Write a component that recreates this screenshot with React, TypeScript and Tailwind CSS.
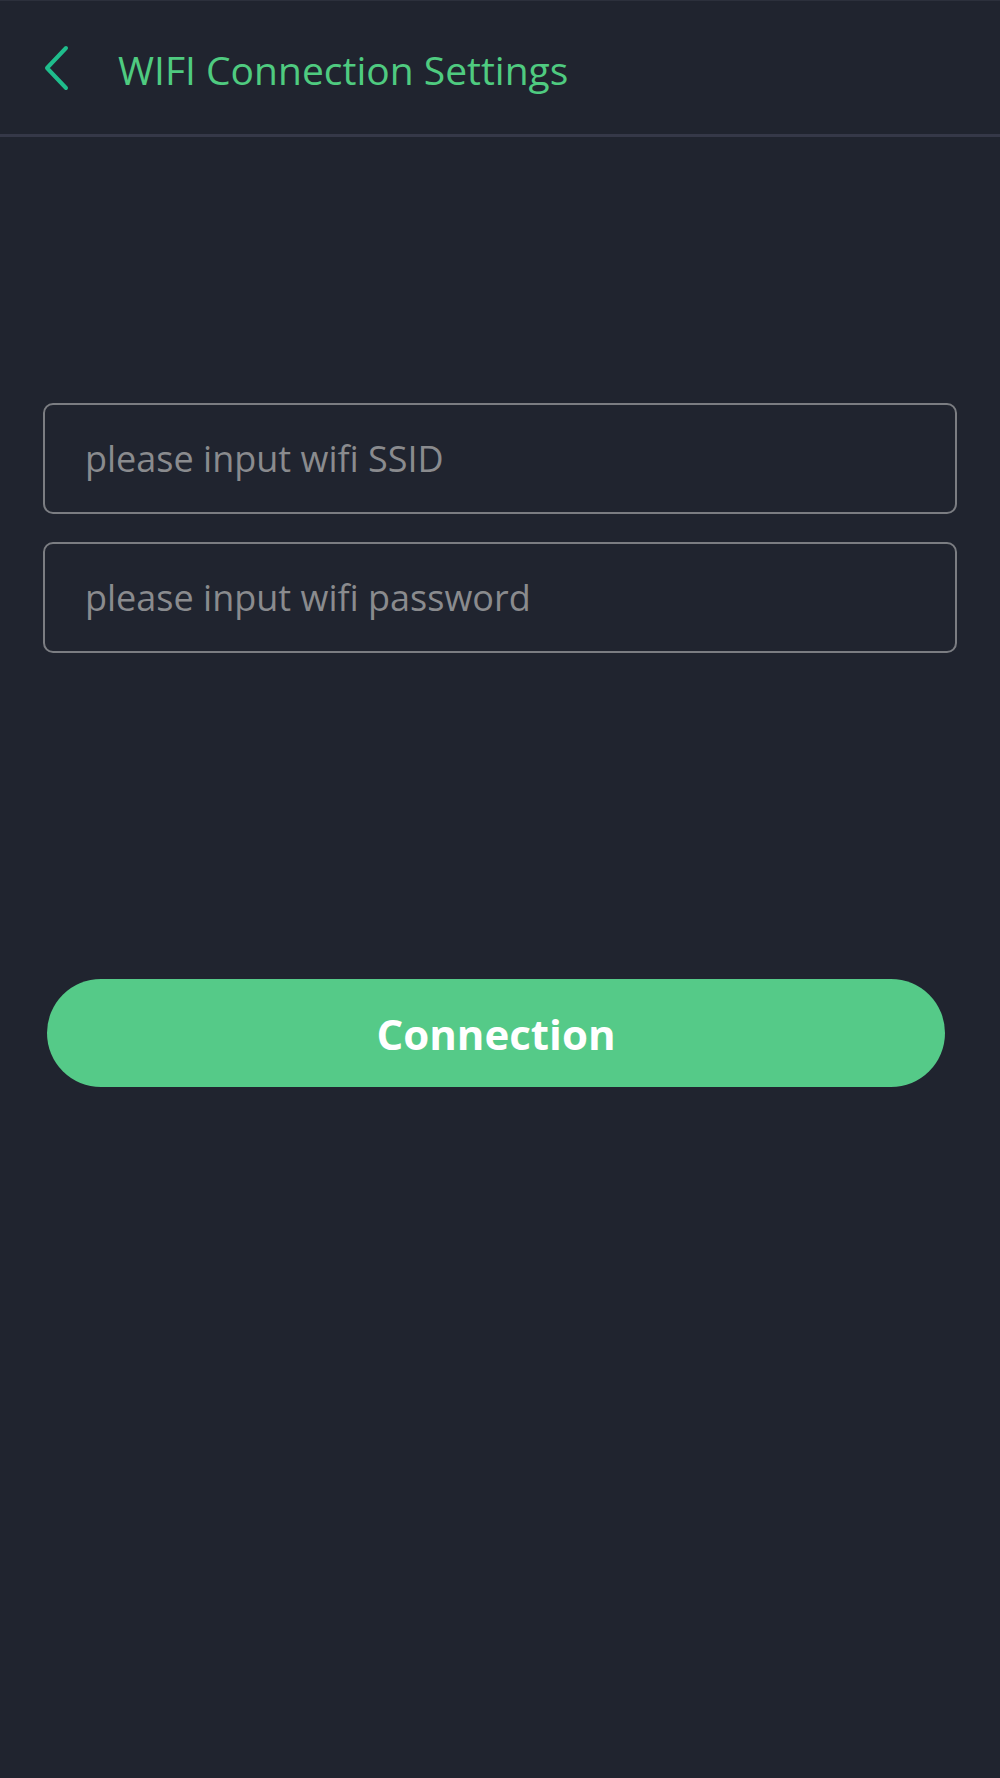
import React from 'react';

const App: React.FC = () => {
  return (
    <div className="min-h-[1778px] w-full bg-[#20242f] font-['Open_Sans',sans-serif]">
      {/* Header */}
      <header className="flex h-[137px] items-center border-b-[3px] border-[#353848] border-t border-t-[#2c303c]">
        <button className="ml-[42px] flex h-[46px] w-[30px] items-center">
          <svg width="28" height="46" viewBox="0 0 28 46" fill="none">
            <path d="M24 3 L5 23 L24 43" stroke="#1fbd8c" strokeWidth="4" strokeLinecap="round" strokeLinejoin="round" />
          </svg>
        </button>
        <h1 className="ml-[46px] pt-[4px] text-[39px] font-normal leading-none text-[#4fcb80]">
          WIFI Connection Settings
        </h1>
      </header>

      {/* Form */}
      <div className="flex flex-col gap-[28px] px-[43px] pt-[266px]">
        <input
          className="h-[111px] w-full rounded-[10px] border-2 border-[#7b7d82] bg-transparent px-[40px] text-[36px] text-white outline-none placeholder:text-[#8a8b8e]"
          placeholder="please input wifi SSID"
        />
        <input
          type="password"
          className="h-[111px] w-full rounded-[10px] border-2 border-[#7b7d82] bg-transparent px-[40px] text-[36px] text-white outline-none placeholder:text-[#8a8b8e]"
          placeholder="please input wifi password"
        />
      </div>

      <div className="pl-[47px] pt-[326px]">
        <button className="h-[108px] w-[898px] rounded-full bg-[#55ca88] text-[42px] font-bold text-white">
          Connection
        </button>
      </div>
    </div>
  );
};

export default App;
